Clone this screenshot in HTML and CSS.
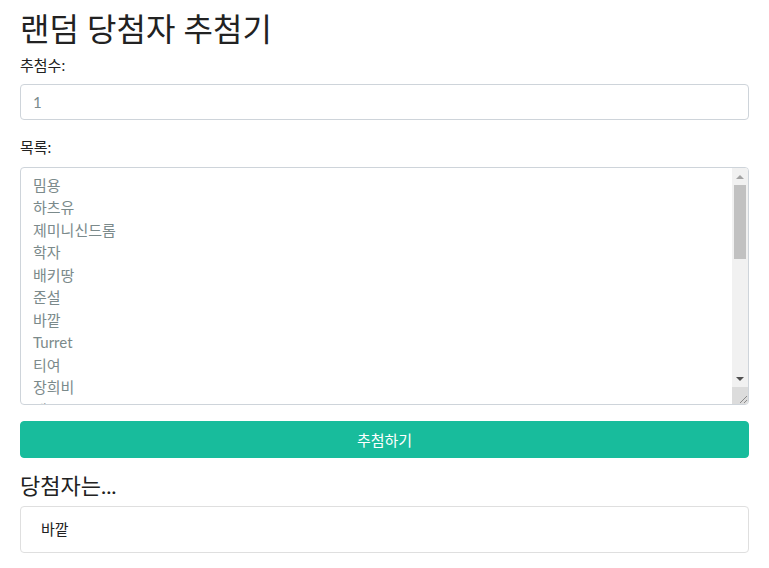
FILE: index.html
```html
<!DOCTYPE html>
<html lang="ko">
<head>
<meta charset="utf-8">
<title>랜덤 당첨자 추첨기</title>
<link rel="stylesheet" href="styles.css">
</head>
<body>
<div class="container">
  <h2 class="title">랜덤 당첨자 추첨기</h2>
  <div class="form-group">
    <label class="label" for="count">추첨수:</label>
    <input class="form-control" id="count" type="text" value="1">
  </div>
  <div class="form-group">
    <label class="label" for="list">목록:</label>
    <div class="textarea-wrap">
      <textarea class="form-control textarea" id="list" rows="10">밈용
하츠유
제미니신드롬
학자
배키땅
준설
바깥
Turret
티여
장희비
재시
라온
하늘</textarea>
      <div class="scrollbar" aria-hidden="true">
        <div class="sb-btn"><span class="arrow-up"></span></div>
        <div class="sb-track"><div class="sb-thumb"></div></div>
        <div class="sb-btn"><span class="arrow-down"></span></div>
        <div class="sb-corner">
          <svg width="16" height="16" viewBox="0 0 16 16">
            <line x1="8" y1="15" x2="15" y2="8" stroke="#8a8a8a" stroke-width="1"/>
            <line x1="12" y1="15" x2="15" y2="12" stroke="#8a8a8a" stroke-width="1"/>
          </svg>
        </div>
      </div>
    </div>
  </div>
  <button class="btn" type="button">추첨하기</button>
  <h4 class="result-title">당첨자는...</h4>
  <div class="result">바깥</div>
</div>
</body>
</html>
```
FILE: styles.css
```css
* { box-sizing: border-box; }
html, body { margin: 0; padding: 0; background: #fff; }
body {
  font-family: Lato, "Noto Sans CJK KR", sans-serif;
  font-size: 15px;
  line-height: 1.5;
  color: #212529;
}
.container { padding: 10px 20px 0 20px; }
.title {
  font-family: Lato, "Noto Sans CJK KR", sans-serif;
  font-size: 32px;
  font-weight: 400;
  line-height: 1.2;
  margin: 0 0 6px 0;
  color: #222;
}
.form-group { margin-bottom: 16px; }
.label { display: inline-block; margin-bottom: 7px; font-size: 15px; color: #222; }
.form-control {
  display: block;
  width: 100%;
  height: 36px;
  padding: 5.6px 12px;
  font-family: Lato, "Noto Sans CJK KR", sans-serif;
  font-size: 15px;
  line-height: 1.5;
  color: #7b8a8b;
  background: #fff;
  border: 1px solid #ced4da;
  border-radius: 4px;
  margin: 0;
}
.textarea-wrap { position: relative; margin-top: 2px; }
.textarea {
  height: 238px;
  resize: none;
  overflow: hidden;
  padding-right: 30px;
}
.scrollbar {
  position: absolute;
  top: 1px;
  right: 1px;
  bottom: 1px;
  width: 16px;
  display: flex;
  flex-direction: column;
  background: #f1f1f1;
  border-radius: 0 3px 3px 0;
  overflow: hidden;
}
.sb-btn {
  height: 17px;
  flex: none;
  display: flex;
  align-items: center;
  justify-content: center;
}
.arrow-up {
  width: 0; height: 0;
  border-left: 4px solid transparent;
  border-right: 4px solid transparent;
  border-bottom: 4px solid #a3a3a3;
}
.arrow-down {
  width: 0; height: 0;
  border-left: 4px solid transparent;
  border-right: 4px solid transparent;
  border-top: 4px solid #505050;
}
.sb-track { flex: 1; padding: 0 2px; }
.sb-thumb { height: 74px; background: #c1c1c1; }
.sb-corner {
  height: 17px;
  flex: none;
  background: #dcdcdc;
  display: flex;
  align-items: flex-end;
  justify-content: flex-end;
}
.sb-corner svg { display: block; }
.btn {
  display: block;
  width: 100%;
  height: 37px;
  padding: 5.6px 12px;
  margin-top: 1px;
  font-family: Lato, "Noto Sans CJK KR", sans-serif;
  font-size: 15px;
  line-height: 1.5;
  color: #fff;
  background: #18bc9c;
  border: 1px solid #18bc9c;
  border-radius: 4px;
}
.result-title {
  font-family: Lato, "Noto Sans CJK KR", sans-serif;
  font-size: 22px;
  font-weight: 400;
  line-height: 1.2;
  margin: 15px 0 6px 0;
  color: #222;
}
.result {
  padding: 11.5px 20px;
  border: 1px solid #dfdfdf;
  border-radius: 4px;
  line-height: 1.5;
  color: #222;
}
```
